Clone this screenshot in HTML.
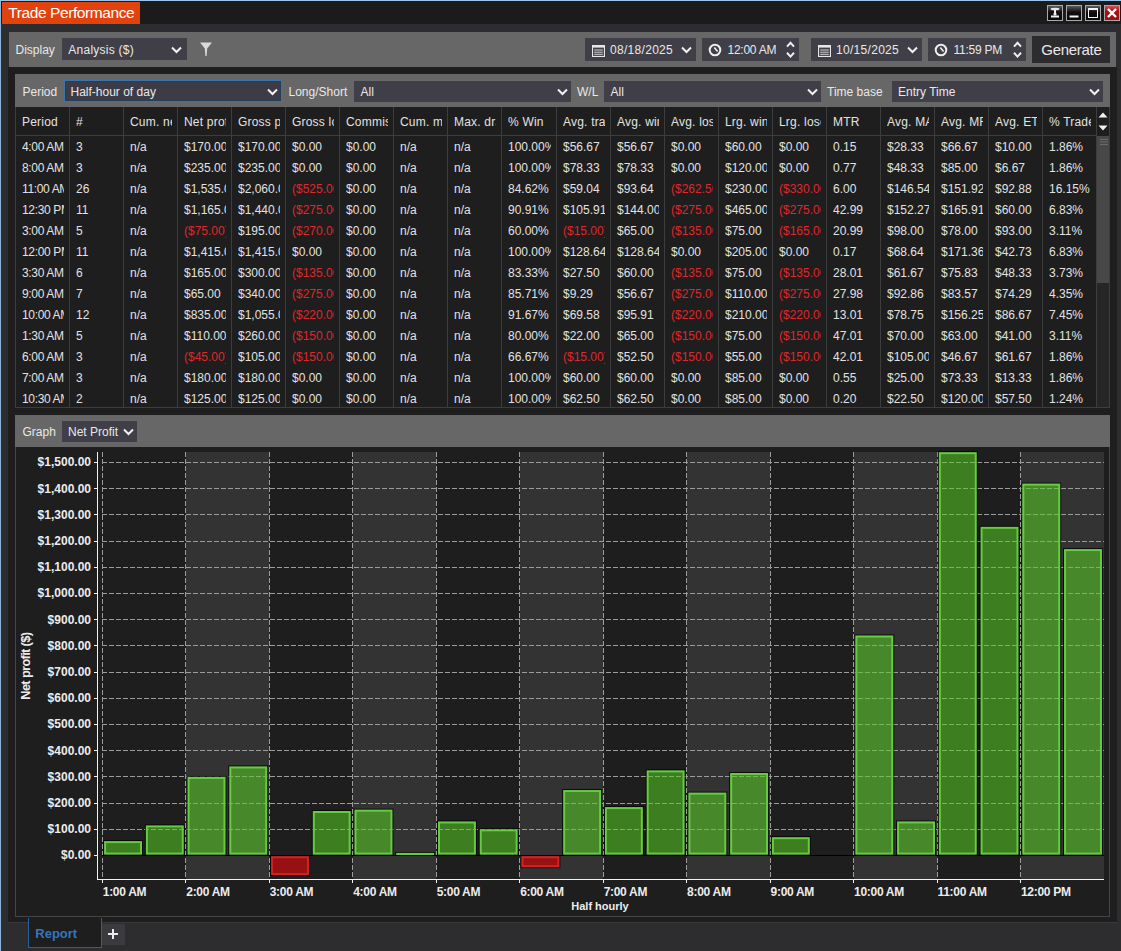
<!DOCTYPE html>
<html><head><meta charset="utf-8"><title>Trade Performance</title><style>
*{margin:0;padding:0;box-sizing:border-box}
html,body{width:1121px;height:951px;overflow:hidden;background:#2d2d30;font-family:"Liberation Sans",sans-serif;position:relative}
.a{position:absolute}
.t{position:absolute;white-space:nowrap}
.cell{position:absolute;white-space:nowrap;overflow:hidden;font-size:12px;line-height:21px;color:#e2e2e2}
.hd{position:absolute;white-space:nowrap;overflow:hidden;font-size:12px;line-height:28px;color:#e2e2e2;letter-spacing:0.2px}
.r{color:#e0262a}
svg{position:absolute;left:0;top:0}
</style></head><body>

<div class="a" style="left:0px;top:0px;width:1121px;height:1px;background:#9cc4e8;"></div>
<div class="a" style="left:0px;top:0px;width:1px;height:951px;background:#8fb6dc;"></div>
<div class="a" style="left:1px;top:1px;width:1120px;height:23px;background:#1b1b1c;"></div>
<div class="a" style="left:2px;top:2px;width:138px;height:22px;background:#e1430f;"></div>
<div class="t" style="left:8.20px;top:4.78px;font-size:15.5px;line-height:15.5px;color:#ffffff;font-weight:normal;letter-spacing:-0.4px">Trade Performance</div>
<div class="a" style="left:1047px;top:5px;width:16px;height:16px;border:1px solid #a9a9a9;background:linear-gradient(#5a5a5a,#0e0e0e 45%,#0a0a0a)"><svg width="14" height="14" viewBox="0 0 14 14"><ellipse cx="7" cy="3" rx="4.5" ry="1.3" fill="#e8e8e8"/><rect x="6" y="4" width="2" height="4" fill="#f0f0f0"/><ellipse cx="7" cy="8" rx="1.6" ry="1.6" fill="#f0f0f0"/><rect x="3" y="9.5" width="8" height="2" fill="#f0f0f0"/></svg></div>
<div class="a" style="left:1066px;top:5px;width:16px;height:16px;border:1px solid #a9a9a9;background:linear-gradient(#5a5a5a,#0e0e0e 45%,#0a0a0a)"><svg width="14" height="14" viewBox="0 0 14 14"><rect x="2.5" y="9.5" width="9" height="2" fill="#f4f4f4"/></svg></div>
<div class="a" style="left:1085px;top:5px;width:16px;height:16px;border:1px solid #a9a9a9;background:linear-gradient(#5a5a5a,#0e0e0e 45%,#0a0a0a)"><svg width="14" height="14" viewBox="0 0 14 14"><rect x="2.5" y="2.5" width="9" height="9" fill="none" stroke="#f4f4f4" stroke-width="1"/><rect x="2.5" y="2" width="9" height="2" fill="#f4f4f4"/></svg></div>
<div class="a" style="left:1104px;top:5px;width:16px;height:16px;border:1px solid #a9a9a9;background:linear-gradient(#d05050,#a81010 40%,#a01010)"><svg width="14" height="14" viewBox="0 0 14 14"><path d="M3 3L11 11M11 3L3 11" stroke="#fff" stroke-width="2.4"/></svg></div>
<div class="a" style="left:8px;top:67px;width:1px;height:856px;background:#3a3a3c;"></div>
<div class="a" style="left:1116px;top:67px;width:1px;height:856px;background:#3a3a3c;"></div>
<div class="a" style="left:8px;top:67px;width:1109px;height:856px;background:#1e1e1e;"></div>
<div class="a" style="left:8px;top:922px;width:1109px;height:1px;background:#3a3a3c;"></div>
<div class="a" style="left:9px;top:32px;width:1107px;height:35px;background:#676767;"></div>
<div class="t" style="left:15.50px;top:43.84px;font-size:12px;line-height:12px;color:#e8e8e8;font-weight:normal;">Display</div>
<div class="a" style="left:62px;top:38px;width:125px;height:22px;background:#403f48;"></div>
<div class="t" style="left:68.30px;top:43.84px;font-size:12px;line-height:12px;color:#e8e8e8;font-weight:normal;letter-spacing:0.25px">Analysis ($)</div>
<svg class="a" style="left:171px;top:45.5px" width="11" height="8" viewBox="0 0 11 8"><path d="M1 1.5L5.5 6L10 1.5" fill="none" stroke="#f0f0f0" stroke-width="2"/></svg>
<svg class="a" style="left:199px;top:41px" width="14" height="16" viewBox="0 0 14 16"><path d="M1 1.5H13L8.2 7.5L7.6 15H6.4L5.8 7.5Z" fill="#dadada"/></svg>
<div class="a" style="left:585px;top:38px;width:111px;height:23px;background:#403f48;"></div>
<svg class="a" style="left:592px;top:44.8px" width="13" height="12" viewBox="0 0 13 12"><rect x="0.5" y="0.5" width="12" height="11" fill="none" stroke="#e6e6e6" stroke-width="1.2"/><rect x="0" y="0" width="13" height="2.6" fill="#e6e6e6"/><path d="M2.2 5H10.8M2.2 7.2H10.8M2.2 9.3H10.8" stroke="#d4d4d4" stroke-width="1"/></svg>
<div class="t" style="left:610.00px;top:44.34px;font-size:12px;line-height:12px;color:#e8e8e8;font-weight:normal;letter-spacing:0.3px">08/18/2025</div>
<svg class="a" style="left:681px;top:46px" width="11" height="8" viewBox="0 0 11 8"><path d="M1 1.5L5.5 6L10 1.5" fill="none" stroke="#f0f0f0" stroke-width="2"/></svg>
<div class="a" style="left:702px;top:38px;width:97px;height:23px;background:#403f48;"></div>
<svg class="a" style="left:708px;top:43px" width="14" height="14" viewBox="0 0 14 14"><circle cx="7" cy="7" r="5.3" fill="none" stroke="#eeeeee" stroke-width="2"/><path d="M6.3 4.6L9.6 8.6" fill="none" stroke="#eeeeee" stroke-width="1.6"/></svg>
<div class="t" style="left:727.50px;top:44.34px;font-size:12px;line-height:12px;color:#e8e8e8;font-weight:normal;letter-spacing:-0.25px">12:00 AM</div>
<svg class="a" style="left:785.5px;top:40.5px" width="9" height="18" viewBox="0 0 9 18"><path d="M1 5.6L4.5 1.8L8 5.6M1 11.8L4.5 15.6L8 11.8" fill="none" stroke="#eeeeee" stroke-width="2"/></svg>
<div class="a" style="left:811px;top:38px;width:111px;height:23px;background:#403f48;"></div>
<svg class="a" style="left:818px;top:44.8px" width="13" height="12" viewBox="0 0 13 12"><rect x="0.5" y="0.5" width="12" height="11" fill="none" stroke="#e6e6e6" stroke-width="1.2"/><rect x="0" y="0" width="13" height="2.6" fill="#e6e6e6"/><path d="M2.2 5H10.8M2.2 7.2H10.8M2.2 9.3H10.8" stroke="#d4d4d4" stroke-width="1"/></svg>
<div class="t" style="left:836.00px;top:44.34px;font-size:12px;line-height:12px;color:#e8e8e8;font-weight:normal;letter-spacing:0.3px">10/15/2025</div>
<svg class="a" style="left:907px;top:46px" width="11" height="8" viewBox="0 0 11 8"><path d="M1 1.5L5.5 6L10 1.5" fill="none" stroke="#f0f0f0" stroke-width="2"/></svg>
<div class="a" style="left:928px;top:38px;width:98px;height:23px;background:#403f48;"></div>
<svg class="a" style="left:934px;top:43px" width="14" height="14" viewBox="0 0 14 14"><circle cx="7" cy="7" r="5.3" fill="none" stroke="#eeeeee" stroke-width="2"/><path d="M6.3 4.6L9.6 8.6" fill="none" stroke="#eeeeee" stroke-width="1.6"/></svg>
<div class="t" style="left:953.50px;top:44.34px;font-size:12px;line-height:12px;color:#e8e8e8;font-weight:normal;letter-spacing:-0.25px">11:59 PM</div>
<svg class="a" style="left:1012.5px;top:40.5px" width="9" height="18" viewBox="0 0 9 18"><path d="M1 5.6L4.5 1.8L8 5.6M1 11.8L4.5 15.6L8 11.8" fill="none" stroke="#eeeeee" stroke-width="2"/></svg>
<div class="a" style="left:1032px;top:36px;width:78px;height:27px;background:#2c2c2e;"></div>
<div class="t" style="left:1041.30px;top:42.30px;font-size:15px;line-height:15px;color:#e8e8e8;font-weight:normal;letter-spacing:-0.3px">Generate</div>
<div class="a" style="left:15px;top:74px;width:1095px;height:33px;background:#676767;"></div>
<div class="t" style="left:22.50px;top:86.34px;font-size:12px;line-height:12px;color:#e8e8e8;font-weight:normal;">Period</div>
<div class="a" style="left:64px;top:80px;width:218px;height:22px;background:#3d3c46;border:1px solid #3a74ad;box-shadow:inset 0 0 0 1px #22405e"></div>
<div class="t" style="left:70.50px;top:86.34px;font-size:12px;line-height:12px;color:#e8e8e8;font-weight:normal;">Half-hour of day</div>
<svg class="a" style="left:267px;top:88px" width="11" height="8" viewBox="0 0 11 8"><path d="M1 1.5L5.5 6L10 1.5" fill="none" stroke="#f0f0f0" stroke-width="2"/></svg>
<div class="t" style="left:288.50px;top:86.34px;font-size:12px;line-height:12px;color:#e8e8e8;font-weight:normal;">Long/Short</div>
<div class="a" style="left:354px;top:81px;width:217px;height:21px;background:#403f48;"></div>
<div class="t" style="left:360.50px;top:86.34px;font-size:12px;line-height:12px;color:#e8e8e8;font-weight:normal;">All</div>
<svg class="a" style="left:556.5px;top:88px" width="11" height="8" viewBox="0 0 11 8"><path d="M1 1.5L5.5 6L10 1.5" fill="none" stroke="#f0f0f0" stroke-width="2"/></svg>
<div class="t" style="left:577.00px;top:86.34px;font-size:12px;line-height:12px;color:#e8e8e8;font-weight:normal;">W/L</div>
<div class="a" style="left:604px;top:81px;width:217px;height:21px;background:#403f48;"></div>
<div class="t" style="left:610.50px;top:86.34px;font-size:12px;line-height:12px;color:#e8e8e8;font-weight:normal;">All</div>
<svg class="a" style="left:807px;top:88px" width="11" height="8" viewBox="0 0 11 8"><path d="M1 1.5L5.5 6L10 1.5" fill="none" stroke="#f0f0f0" stroke-width="2"/></svg>
<div class="t" style="left:827.00px;top:86.34px;font-size:12px;line-height:12px;color:#e8e8e8;font-weight:normal;">Time base</div>
<div class="a" style="left:892px;top:81px;width:211px;height:21px;background:#403f48;"></div>
<div class="t" style="left:898.00px;top:86.34px;font-size:12px;line-height:12px;color:#e8e8e8;font-weight:normal;">Entry Time</div>
<svg class="a" style="left:1088.5px;top:88px" width="11" height="8" viewBox="0 0 11 8"><path d="M1 1.5L5.5 6L10 1.5" fill="none" stroke="#f0f0f0" stroke-width="2"/></svg>
<div class="a" style="left:15px;top:107px;width:1095px;height:301px;background:#1e1e1e;"></div>
<div class="a" style="left:15px;top:107px;width:1095px;height:301px;overflow:hidden">
<div class="hd" style="left:7px;top:1px;width:42px">Period</div>
<div class="hd" style="left:61px;top:1px;width:42px">#</div>
<div class="hd" style="left:115px;top:1px;width:42px">Cum. net profit</div>
<div class="hd" style="left:169px;top:1px;width:42px">Net profit</div>
<div class="hd" style="left:223px;top:1px;width:42px">Gross profit</div>
<div class="hd" style="left:277px;top:1px;width:42px">Gross loss</div>
<div class="hd" style="left:331px;top:1px;width:42px">Commission</div>
<div class="hd" style="left:385px;top:1px;width:42px">Cum. max drawdown</div>
<div class="hd" style="left:439px;top:1px;width:42px">Max. drawdown</div>
<div class="hd" style="left:493px;top:1px;width:43px">% Win</div>
<div class="hd" style="left:548px;top:1px;width:42px">Avg. trade</div>
<div class="hd" style="left:602px;top:1px;width:42px">Avg. winner</div>
<div class="hd" style="left:656px;top:1px;width:42px">Avg. loser</div>
<div class="hd" style="left:710px;top:1px;width:42px">Lrg. winner</div>
<div class="hd" style="left:764px;top:1px;width:42px">Lrg. loser</div>
<div class="hd" style="left:818px;top:1px;width:42px">MTR</div>
<div class="hd" style="left:872px;top:1px;width:42px">Avg. MAE</div>
<div class="hd" style="left:926px;top:1px;width:42px">Avg. MFE</div>
<div class="hd" style="left:980px;top:1px;width:42px">Avg. ETD</div>
<div class="hd" style="left:1034px;top:1px;width:42px">% Trade</div>
<div class="cell" style="left:7px;top:30px;width:42px;letter-spacing:-0.35px;">4:00 AM</div>
<div class="cell" style="left:61px;top:30px;width:42px;">3</div>
<div class="cell" style="left:115px;top:30px;width:42px;">n/a</div>
<div class="cell" style="left:169px;top:30px;width:42px;">$170.00</div>
<div class="cell" style="left:223px;top:30px;width:42px;">$170.00</div>
<div class="cell" style="left:277px;top:30px;width:42px;">$0.00</div>
<div class="cell" style="left:331px;top:30px;width:42px;">$0.00</div>
<div class="cell" style="left:385px;top:30px;width:42px;">n/a</div>
<div class="cell" style="left:439px;top:30px;width:42px;">n/a</div>
<div class="cell" style="left:493px;top:30px;width:43px;">100.00%</div>
<div class="cell" style="left:548px;top:30px;width:42px;">$56.67</div>
<div class="cell" style="left:602px;top:30px;width:42px;">$56.67</div>
<div class="cell" style="left:656px;top:30px;width:42px;">$0.00</div>
<div class="cell" style="left:710px;top:30px;width:42px;">$60.00</div>
<div class="cell" style="left:764px;top:30px;width:42px;">$0.00</div>
<div class="cell" style="left:818px;top:30px;width:42px;">0.15</div>
<div class="cell" style="left:872px;top:30px;width:42px;">$28.33</div>
<div class="cell" style="left:926px;top:30px;width:42px;">$66.67</div>
<div class="cell" style="left:980px;top:30px;width:42px;">$10.00</div>
<div class="cell" style="left:1034px;top:30px;width:42px;">1.86%</div>
<div class="cell" style="left:7px;top:51px;width:42px;letter-spacing:-0.35px;">8:00 AM</div>
<div class="cell" style="left:61px;top:51px;width:42px;">3</div>
<div class="cell" style="left:115px;top:51px;width:42px;">n/a</div>
<div class="cell" style="left:169px;top:51px;width:42px;">$235.00</div>
<div class="cell" style="left:223px;top:51px;width:42px;">$235.00</div>
<div class="cell" style="left:277px;top:51px;width:42px;">$0.00</div>
<div class="cell" style="left:331px;top:51px;width:42px;">$0.00</div>
<div class="cell" style="left:385px;top:51px;width:42px;">n/a</div>
<div class="cell" style="left:439px;top:51px;width:42px;">n/a</div>
<div class="cell" style="left:493px;top:51px;width:43px;">100.00%</div>
<div class="cell" style="left:548px;top:51px;width:42px;">$78.33</div>
<div class="cell" style="left:602px;top:51px;width:42px;">$78.33</div>
<div class="cell" style="left:656px;top:51px;width:42px;">$0.00</div>
<div class="cell" style="left:710px;top:51px;width:42px;">$120.00</div>
<div class="cell" style="left:764px;top:51px;width:42px;">$0.00</div>
<div class="cell" style="left:818px;top:51px;width:42px;">0.77</div>
<div class="cell" style="left:872px;top:51px;width:42px;">$48.33</div>
<div class="cell" style="left:926px;top:51px;width:42px;">$85.00</div>
<div class="cell" style="left:980px;top:51px;width:42px;">$6.67</div>
<div class="cell" style="left:1034px;top:51px;width:42px;">1.86%</div>
<div class="cell" style="left:7px;top:72px;width:42px;letter-spacing:-0.35px;">11:00 AM</div>
<div class="cell" style="left:61px;top:72px;width:42px;">26</div>
<div class="cell" style="left:115px;top:72px;width:42px;">n/a</div>
<div class="cell" style="left:169px;top:72px;width:42px;">$1,535.00</div>
<div class="cell" style="left:223px;top:72px;width:42px;">$2,060.00</div>
<div class="cell r" style="left:277px;top:72px;width:42px;">($525.00)</div>
<div class="cell" style="left:331px;top:72px;width:42px;">$0.00</div>
<div class="cell" style="left:385px;top:72px;width:42px;">n/a</div>
<div class="cell" style="left:439px;top:72px;width:42px;">n/a</div>
<div class="cell" style="left:493px;top:72px;width:43px;">84.62%</div>
<div class="cell" style="left:548px;top:72px;width:42px;">$59.04</div>
<div class="cell" style="left:602px;top:72px;width:42px;">$93.64</div>
<div class="cell r" style="left:656px;top:72px;width:42px;">($262.50)</div>
<div class="cell" style="left:710px;top:72px;width:42px;">$230.00</div>
<div class="cell r" style="left:764px;top:72px;width:42px;">($330.00)</div>
<div class="cell" style="left:818px;top:72px;width:42px;">6.00</div>
<div class="cell" style="left:872px;top:72px;width:42px;">$146.54</div>
<div class="cell" style="left:926px;top:72px;width:42px;">$151.92</div>
<div class="cell" style="left:980px;top:72px;width:42px;">$92.88</div>
<div class="cell" style="left:1034px;top:72px;width:42px;">16.15%</div>
<div class="cell" style="left:7px;top:93px;width:42px;letter-spacing:-0.35px;">12:30 PM</div>
<div class="cell" style="left:61px;top:93px;width:42px;">11</div>
<div class="cell" style="left:115px;top:93px;width:42px;">n/a</div>
<div class="cell" style="left:169px;top:93px;width:42px;">$1,165.00</div>
<div class="cell" style="left:223px;top:93px;width:42px;">$1,440.00</div>
<div class="cell r" style="left:277px;top:93px;width:42px;">($275.00)</div>
<div class="cell" style="left:331px;top:93px;width:42px;">$0.00</div>
<div class="cell" style="left:385px;top:93px;width:42px;">n/a</div>
<div class="cell" style="left:439px;top:93px;width:42px;">n/a</div>
<div class="cell" style="left:493px;top:93px;width:43px;">90.91%</div>
<div class="cell" style="left:548px;top:93px;width:42px;">$105.91</div>
<div class="cell" style="left:602px;top:93px;width:42px;">$144.00</div>
<div class="cell r" style="left:656px;top:93px;width:42px;">($275.00)</div>
<div class="cell" style="left:710px;top:93px;width:42px;">$465.00</div>
<div class="cell r" style="left:764px;top:93px;width:42px;">($275.00)</div>
<div class="cell" style="left:818px;top:93px;width:42px;">42.99</div>
<div class="cell" style="left:872px;top:93px;width:42px;">$152.27</div>
<div class="cell" style="left:926px;top:93px;width:42px;">$165.91</div>
<div class="cell" style="left:980px;top:93px;width:42px;">$60.00</div>
<div class="cell" style="left:1034px;top:93px;width:42px;">6.83%</div>
<div class="cell" style="left:7px;top:114px;width:42px;letter-spacing:-0.35px;">3:00 AM</div>
<div class="cell" style="left:61px;top:114px;width:42px;">5</div>
<div class="cell" style="left:115px;top:114px;width:42px;">n/a</div>
<div class="cell r" style="left:169px;top:114px;width:42px;">($75.00)</div>
<div class="cell" style="left:223px;top:114px;width:42px;">$195.00</div>
<div class="cell r" style="left:277px;top:114px;width:42px;">($270.00)</div>
<div class="cell" style="left:331px;top:114px;width:42px;">$0.00</div>
<div class="cell" style="left:385px;top:114px;width:42px;">n/a</div>
<div class="cell" style="left:439px;top:114px;width:42px;">n/a</div>
<div class="cell" style="left:493px;top:114px;width:43px;">60.00%</div>
<div class="cell r" style="left:548px;top:114px;width:42px;">($15.00)</div>
<div class="cell" style="left:602px;top:114px;width:42px;">$65.00</div>
<div class="cell r" style="left:656px;top:114px;width:42px;">($135.00)</div>
<div class="cell" style="left:710px;top:114px;width:42px;">$75.00</div>
<div class="cell r" style="left:764px;top:114px;width:42px;">($165.00)</div>
<div class="cell" style="left:818px;top:114px;width:42px;">20.99</div>
<div class="cell" style="left:872px;top:114px;width:42px;">$98.00</div>
<div class="cell" style="left:926px;top:114px;width:42px;">$78.00</div>
<div class="cell" style="left:980px;top:114px;width:42px;">$93.00</div>
<div class="cell" style="left:1034px;top:114px;width:42px;">3.11%</div>
<div class="cell" style="left:7px;top:135px;width:42px;letter-spacing:-0.35px;">12:00 PM</div>
<div class="cell" style="left:61px;top:135px;width:42px;">11</div>
<div class="cell" style="left:115px;top:135px;width:42px;">n/a</div>
<div class="cell" style="left:169px;top:135px;width:42px;">$1,415.00</div>
<div class="cell" style="left:223px;top:135px;width:42px;">$1,415.00</div>
<div class="cell" style="left:277px;top:135px;width:42px;">$0.00</div>
<div class="cell" style="left:331px;top:135px;width:42px;">$0.00</div>
<div class="cell" style="left:385px;top:135px;width:42px;">n/a</div>
<div class="cell" style="left:439px;top:135px;width:42px;">n/a</div>
<div class="cell" style="left:493px;top:135px;width:43px;">100.00%</div>
<div class="cell" style="left:548px;top:135px;width:42px;">$128.64</div>
<div class="cell" style="left:602px;top:135px;width:42px;">$128.64</div>
<div class="cell" style="left:656px;top:135px;width:42px;">$0.00</div>
<div class="cell" style="left:710px;top:135px;width:42px;">$205.00</div>
<div class="cell" style="left:764px;top:135px;width:42px;">$0.00</div>
<div class="cell" style="left:818px;top:135px;width:42px;">0.17</div>
<div class="cell" style="left:872px;top:135px;width:42px;">$68.64</div>
<div class="cell" style="left:926px;top:135px;width:42px;">$171.36</div>
<div class="cell" style="left:980px;top:135px;width:42px;">$42.73</div>
<div class="cell" style="left:1034px;top:135px;width:42px;">6.83%</div>
<div class="cell" style="left:7px;top:156px;width:42px;letter-spacing:-0.35px;">3:30 AM</div>
<div class="cell" style="left:61px;top:156px;width:42px;">6</div>
<div class="cell" style="left:115px;top:156px;width:42px;">n/a</div>
<div class="cell" style="left:169px;top:156px;width:42px;">$165.00</div>
<div class="cell" style="left:223px;top:156px;width:42px;">$300.00</div>
<div class="cell r" style="left:277px;top:156px;width:42px;">($135.00)</div>
<div class="cell" style="left:331px;top:156px;width:42px;">$0.00</div>
<div class="cell" style="left:385px;top:156px;width:42px;">n/a</div>
<div class="cell" style="left:439px;top:156px;width:42px;">n/a</div>
<div class="cell" style="left:493px;top:156px;width:43px;">83.33%</div>
<div class="cell" style="left:548px;top:156px;width:42px;">$27.50</div>
<div class="cell" style="left:602px;top:156px;width:42px;">$60.00</div>
<div class="cell r" style="left:656px;top:156px;width:42px;">($135.00)</div>
<div class="cell" style="left:710px;top:156px;width:42px;">$75.00</div>
<div class="cell r" style="left:764px;top:156px;width:42px;">($135.00)</div>
<div class="cell" style="left:818px;top:156px;width:42px;">28.01</div>
<div class="cell" style="left:872px;top:156px;width:42px;">$61.67</div>
<div class="cell" style="left:926px;top:156px;width:42px;">$75.83</div>
<div class="cell" style="left:980px;top:156px;width:42px;">$48.33</div>
<div class="cell" style="left:1034px;top:156px;width:42px;">3.73%</div>
<div class="cell" style="left:7px;top:177px;width:42px;letter-spacing:-0.35px;">9:00 AM</div>
<div class="cell" style="left:61px;top:177px;width:42px;">7</div>
<div class="cell" style="left:115px;top:177px;width:42px;">n/a</div>
<div class="cell" style="left:169px;top:177px;width:42px;">$65.00</div>
<div class="cell" style="left:223px;top:177px;width:42px;">$340.00</div>
<div class="cell r" style="left:277px;top:177px;width:42px;">($275.00)</div>
<div class="cell" style="left:331px;top:177px;width:42px;">$0.00</div>
<div class="cell" style="left:385px;top:177px;width:42px;">n/a</div>
<div class="cell" style="left:439px;top:177px;width:42px;">n/a</div>
<div class="cell" style="left:493px;top:177px;width:43px;">85.71%</div>
<div class="cell" style="left:548px;top:177px;width:42px;">$9.29</div>
<div class="cell" style="left:602px;top:177px;width:42px;">$56.67</div>
<div class="cell r" style="left:656px;top:177px;width:42px;">($275.00)</div>
<div class="cell" style="left:710px;top:177px;width:42px;">$110.00</div>
<div class="cell r" style="left:764px;top:177px;width:42px;">($275.00)</div>
<div class="cell" style="left:818px;top:177px;width:42px;">27.98</div>
<div class="cell" style="left:872px;top:177px;width:42px;">$92.86</div>
<div class="cell" style="left:926px;top:177px;width:42px;">$83.57</div>
<div class="cell" style="left:980px;top:177px;width:42px;">$74.29</div>
<div class="cell" style="left:1034px;top:177px;width:42px;">4.35%</div>
<div class="cell" style="left:7px;top:198px;width:42px;letter-spacing:-0.35px;">10:00 AM</div>
<div class="cell" style="left:61px;top:198px;width:42px;">12</div>
<div class="cell" style="left:115px;top:198px;width:42px;">n/a</div>
<div class="cell" style="left:169px;top:198px;width:42px;">$835.00</div>
<div class="cell" style="left:223px;top:198px;width:42px;">$1,055.00</div>
<div class="cell r" style="left:277px;top:198px;width:42px;">($220.00)</div>
<div class="cell" style="left:331px;top:198px;width:42px;">$0.00</div>
<div class="cell" style="left:385px;top:198px;width:42px;">n/a</div>
<div class="cell" style="left:439px;top:198px;width:42px;">n/a</div>
<div class="cell" style="left:493px;top:198px;width:43px;">91.67%</div>
<div class="cell" style="left:548px;top:198px;width:42px;">$69.58</div>
<div class="cell" style="left:602px;top:198px;width:42px;">$95.91</div>
<div class="cell r" style="left:656px;top:198px;width:42px;">($220.00)</div>
<div class="cell" style="left:710px;top:198px;width:42px;">$210.00</div>
<div class="cell r" style="left:764px;top:198px;width:42px;">($220.00)</div>
<div class="cell" style="left:818px;top:198px;width:42px;">13.01</div>
<div class="cell" style="left:872px;top:198px;width:42px;">$78.75</div>
<div class="cell" style="left:926px;top:198px;width:42px;">$156.25</div>
<div class="cell" style="left:980px;top:198px;width:42px;">$86.67</div>
<div class="cell" style="left:1034px;top:198px;width:42px;">7.45%</div>
<div class="cell" style="left:7px;top:219px;width:42px;letter-spacing:-0.35px;">1:30 AM</div>
<div class="cell" style="left:61px;top:219px;width:42px;">5</div>
<div class="cell" style="left:115px;top:219px;width:42px;">n/a</div>
<div class="cell" style="left:169px;top:219px;width:42px;">$110.00</div>
<div class="cell" style="left:223px;top:219px;width:42px;">$260.00</div>
<div class="cell r" style="left:277px;top:219px;width:42px;">($150.00)</div>
<div class="cell" style="left:331px;top:219px;width:42px;">$0.00</div>
<div class="cell" style="left:385px;top:219px;width:42px;">n/a</div>
<div class="cell" style="left:439px;top:219px;width:42px;">n/a</div>
<div class="cell" style="left:493px;top:219px;width:43px;">80.00%</div>
<div class="cell" style="left:548px;top:219px;width:42px;">$22.00</div>
<div class="cell" style="left:602px;top:219px;width:42px;">$65.00</div>
<div class="cell r" style="left:656px;top:219px;width:42px;">($150.00)</div>
<div class="cell" style="left:710px;top:219px;width:42px;">$75.00</div>
<div class="cell r" style="left:764px;top:219px;width:42px;">($150.00)</div>
<div class="cell" style="left:818px;top:219px;width:42px;">47.01</div>
<div class="cell" style="left:872px;top:219px;width:42px;">$70.00</div>
<div class="cell" style="left:926px;top:219px;width:42px;">$63.00</div>
<div class="cell" style="left:980px;top:219px;width:42px;">$41.00</div>
<div class="cell" style="left:1034px;top:219px;width:42px;">3.11%</div>
<div class="cell" style="left:7px;top:240px;width:42px;letter-spacing:-0.35px;">6:00 AM</div>
<div class="cell" style="left:61px;top:240px;width:42px;">3</div>
<div class="cell" style="left:115px;top:240px;width:42px;">n/a</div>
<div class="cell r" style="left:169px;top:240px;width:42px;">($45.00)</div>
<div class="cell" style="left:223px;top:240px;width:42px;">$105.00</div>
<div class="cell r" style="left:277px;top:240px;width:42px;">($150.00)</div>
<div class="cell" style="left:331px;top:240px;width:42px;">$0.00</div>
<div class="cell" style="left:385px;top:240px;width:42px;">n/a</div>
<div class="cell" style="left:439px;top:240px;width:42px;">n/a</div>
<div class="cell" style="left:493px;top:240px;width:43px;">66.67%</div>
<div class="cell r" style="left:548px;top:240px;width:42px;">($15.00)</div>
<div class="cell" style="left:602px;top:240px;width:42px;">$52.50</div>
<div class="cell r" style="left:656px;top:240px;width:42px;">($150.00)</div>
<div class="cell" style="left:710px;top:240px;width:42px;">$55.00</div>
<div class="cell r" style="left:764px;top:240px;width:42px;">($150.00)</div>
<div class="cell" style="left:818px;top:240px;width:42px;">42.01</div>
<div class="cell" style="left:872px;top:240px;width:42px;">$105.00</div>
<div class="cell" style="left:926px;top:240px;width:42px;">$46.67</div>
<div class="cell" style="left:980px;top:240px;width:42px;">$61.67</div>
<div class="cell" style="left:1034px;top:240px;width:42px;">1.86%</div>
<div class="cell" style="left:7px;top:261px;width:42px;letter-spacing:-0.35px;">7:00 AM</div>
<div class="cell" style="left:61px;top:261px;width:42px;">3</div>
<div class="cell" style="left:115px;top:261px;width:42px;">n/a</div>
<div class="cell" style="left:169px;top:261px;width:42px;">$180.00</div>
<div class="cell" style="left:223px;top:261px;width:42px;">$180.00</div>
<div class="cell" style="left:277px;top:261px;width:42px;">$0.00</div>
<div class="cell" style="left:331px;top:261px;width:42px;">$0.00</div>
<div class="cell" style="left:385px;top:261px;width:42px;">n/a</div>
<div class="cell" style="left:439px;top:261px;width:42px;">n/a</div>
<div class="cell" style="left:493px;top:261px;width:43px;">100.00%</div>
<div class="cell" style="left:548px;top:261px;width:42px;">$60.00</div>
<div class="cell" style="left:602px;top:261px;width:42px;">$60.00</div>
<div class="cell" style="left:656px;top:261px;width:42px;">$0.00</div>
<div class="cell" style="left:710px;top:261px;width:42px;">$85.00</div>
<div class="cell" style="left:764px;top:261px;width:42px;">$0.00</div>
<div class="cell" style="left:818px;top:261px;width:42px;">0.55</div>
<div class="cell" style="left:872px;top:261px;width:42px;">$25.00</div>
<div class="cell" style="left:926px;top:261px;width:42px;">$73.33</div>
<div class="cell" style="left:980px;top:261px;width:42px;">$13.33</div>
<div class="cell" style="left:1034px;top:261px;width:42px;">1.86%</div>
<div class="cell" style="left:7px;top:282px;width:42px;letter-spacing:-0.35px;">10:30 AM</div>
<div class="cell" style="left:61px;top:282px;width:42px;">2</div>
<div class="cell" style="left:115px;top:282px;width:42px;">n/a</div>
<div class="cell" style="left:169px;top:282px;width:42px;">$125.00</div>
<div class="cell" style="left:223px;top:282px;width:42px;">$125.00</div>
<div class="cell" style="left:277px;top:282px;width:42px;">$0.00</div>
<div class="cell" style="left:331px;top:282px;width:42px;">$0.00</div>
<div class="cell" style="left:385px;top:282px;width:42px;">n/a</div>
<div class="cell" style="left:439px;top:282px;width:42px;">n/a</div>
<div class="cell" style="left:493px;top:282px;width:43px;">100.00%</div>
<div class="cell" style="left:548px;top:282px;width:42px;">$62.50</div>
<div class="cell" style="left:602px;top:282px;width:42px;">$62.50</div>
<div class="cell" style="left:656px;top:282px;width:42px;">$0.00</div>
<div class="cell" style="left:710px;top:282px;width:42px;">$85.00</div>
<div class="cell" style="left:764px;top:282px;width:42px;">$0.00</div>
<div class="cell" style="left:818px;top:282px;width:42px;">0.20</div>
<div class="cell" style="left:872px;top:282px;width:42px;">$22.50</div>
<div class="cell" style="left:926px;top:282px;width:42px;">$120.00</div>
<div class="cell" style="left:980px;top:282px;width:42px;">$57.50</div>
<div class="cell" style="left:1034px;top:282px;width:42px;">1.24%</div>
</div>
<div class="a" style="left:15px;top:135px;width:1082px;height:1px;background:#3d3d3d;"></div>
<div class="a" style="left:15px;top:107px;width:1px;height:300px;background:#3d3d3d;"></div>
<div class="a" style="left:69px;top:107px;width:1px;height:300px;background:#3d3d3d;"></div>
<div class="a" style="left:123px;top:107px;width:1px;height:300px;background:#3d3d3d;"></div>
<div class="a" style="left:177px;top:107px;width:1px;height:300px;background:#3d3d3d;"></div>
<div class="a" style="left:231px;top:107px;width:1px;height:300px;background:#3d3d3d;"></div>
<div class="a" style="left:285px;top:107px;width:1px;height:300px;background:#3d3d3d;"></div>
<div class="a" style="left:339px;top:107px;width:1px;height:300px;background:#3d3d3d;"></div>
<div class="a" style="left:393px;top:107px;width:1px;height:300px;background:#3d3d3d;"></div>
<div class="a" style="left:447px;top:107px;width:1px;height:300px;background:#3d3d3d;"></div>
<div class="a" style="left:501px;top:107px;width:1px;height:300px;background:#3d3d3d;"></div>
<div class="a" style="left:556px;top:107px;width:1px;height:300px;background:#3d3d3d;"></div>
<div class="a" style="left:610px;top:107px;width:1px;height:300px;background:#3d3d3d;"></div>
<div class="a" style="left:664px;top:107px;width:1px;height:300px;background:#3d3d3d;"></div>
<div class="a" style="left:718px;top:107px;width:1px;height:300px;background:#3d3d3d;"></div>
<div class="a" style="left:772px;top:107px;width:1px;height:300px;background:#3d3d3d;"></div>
<div class="a" style="left:826px;top:107px;width:1px;height:300px;background:#3d3d3d;"></div>
<div class="a" style="left:880px;top:107px;width:1px;height:300px;background:#3d3d3d;"></div>
<div class="a" style="left:934px;top:107px;width:1px;height:300px;background:#3d3d3d;"></div>
<div class="a" style="left:988px;top:107px;width:1px;height:300px;background:#3d3d3d;"></div>
<div class="a" style="left:1042px;top:107px;width:1px;height:300px;background:#3d3d3d;"></div>
<div class="a" style="left:1096px;top:107px;width:1px;height:300px;background:#3d3d3d;"></div>
<div class="a" style="left:15px;top:407px;width:1095px;height:1px;background:#3d3d3d;"></div>
<div class="a" style="left:1109px;top:107px;width:1px;height:301px;background:#3d3d3d;"></div>
<div class="a" style="left:1097px;top:136px;width:12px;height:271px;background:#262626;"></div>
<div class="a" style="left:1097px;top:136px;width:12px;height:147px;background:#484848;"></div>
<svg class="a" style="left:1098px;top:138px" width="11" height="8"><path d="M2 1.5H10M2 4H10M2 6.5H10" stroke="#6a6a6a" stroke-width="1"/></svg>
<svg class="a" style="left:1097px;top:110px" width="12" height="24"><path d="M1.5 7.5L6 2.5L10.5 7.5Z M1.5 15.5L6 20.5L10.5 15.5Z" fill="#f0f0f0"/></svg>
<div class="a" style="left:15px;top:415px;width:1095px;height:32px;background:#676767;"></div>
<div class="t" style="left:22.50px;top:425.54px;font-size:12px;line-height:12px;color:#e8e8e8;font-weight:normal;">Graph</div>
<div class="a" style="left:62px;top:421px;width:75px;height:21px;background:#403f48;"></div>
<div class="t" style="left:68.00px;top:425.54px;font-size:12px;line-height:12px;color:#e8e8e8;font-weight:normal;">Net Profit</div>
<svg class="a" style="left:122.5px;top:428px" width="11" height="8" viewBox="0 0 11 8"><path d="M1 1.5L5.5 6L10 1.5" fill="none" stroke="#f0f0f0" stroke-width="2"/></svg>
<div class="a" style="left:15px;top:447px;width:1095px;height:470px;background:#1e1e1e;"></div>
<div class="a" style="left:15px;top:447px;width:1px;height:470px;background:#454545;"></div>
<div class="a" style="left:1109px;top:447px;width:1px;height:470px;background:#454545;"></div>
<div class="a" style="left:15px;top:916px;width:1095px;height:1px;background:#454545;"></div>
<div class="a" style="left:28px;top:918px;width:74px;height:30px;background:#1e1e1e;border:1px solid #28609a;border-top:none"></div>
<div class="t" style="left:35.30px;top:927.20px;font-size:13px;line-height:13px;color:#3476bd;font-weight:bold;">Report</div>
<div class="a" style="left:102px;top:924px;width:23px;height:21px;background:#3b3b3f;"></div>
<svg class="a" style="left:107px;top:928px" width="12" height="12"><path d="M6 1V11M1 6H11" stroke="#ececec" stroke-width="2"/></svg>
<svg width="1121" height="951" viewBox="0 0 1121 951" style="position:absolute;left:0;top:0" shape-rendering="crispEdges">
<rect x="185.77" y="452" width="83.47" height="427" fill="#333333"/>
<rect x="352.72" y="452" width="83.47" height="427" fill="#333333"/>
<rect x="519.67" y="452" width="83.47" height="427" fill="#333333"/>
<rect x="686.62" y="452" width="83.47" height="427" fill="#333333"/>
<rect x="853.57" y="452" width="83.47" height="427" fill="#333333"/>
<rect x="1020.51" y="452" width="83.47" height="427" fill="#333333"/>
<line x1="102" y1="829.5" x2="1104" y2="829.5" stroke="#9c9c9c" stroke-width="1" stroke-dasharray="5,2"/>
<line x1="102" y1="803.5" x2="1104" y2="803.5" stroke="#9c9c9c" stroke-width="1" stroke-dasharray="5,2"/>
<line x1="102" y1="776.5" x2="1104" y2="776.5" stroke="#9c9c9c" stroke-width="1" stroke-dasharray="5,2"/>
<line x1="102" y1="750.5" x2="1104" y2="750.5" stroke="#9c9c9c" stroke-width="1" stroke-dasharray="5,2"/>
<line x1="102" y1="724.5" x2="1104" y2="724.5" stroke="#9c9c9c" stroke-width="1" stroke-dasharray="5,2"/>
<line x1="102" y1="698.5" x2="1104" y2="698.5" stroke="#9c9c9c" stroke-width="1" stroke-dasharray="5,2"/>
<line x1="102" y1="672.5" x2="1104" y2="672.5" stroke="#9c9c9c" stroke-width="1" stroke-dasharray="5,2"/>
<line x1="102" y1="645.5" x2="1104" y2="645.5" stroke="#9c9c9c" stroke-width="1" stroke-dasharray="5,2"/>
<line x1="102" y1="619.5" x2="1104" y2="619.5" stroke="#9c9c9c" stroke-width="1" stroke-dasharray="5,2"/>
<line x1="102" y1="593.5" x2="1104" y2="593.5" stroke="#9c9c9c" stroke-width="1" stroke-dasharray="5,2"/>
<line x1="102" y1="567.5" x2="1104" y2="567.5" stroke="#9c9c9c" stroke-width="1" stroke-dasharray="5,2"/>
<line x1="102" y1="541.5" x2="1104" y2="541.5" stroke="#9c9c9c" stroke-width="1" stroke-dasharray="5,2"/>
<line x1="102" y1="514.5" x2="1104" y2="514.5" stroke="#9c9c9c" stroke-width="1" stroke-dasharray="5,2"/>
<line x1="102" y1="488.5" x2="1104" y2="488.5" stroke="#9c9c9c" stroke-width="1" stroke-dasharray="5,2"/>
<line x1="102" y1="462.5" x2="1104" y2="462.5" stroke="#9c9c9c" stroke-width="1" stroke-dasharray="5,2"/>
<line x1="102.5" y1="452" x2="102.5" y2="879" stroke="#9c9c9c" stroke-width="1" stroke-dasharray="5,2"/>
<line x1="185.5" y1="452" x2="185.5" y2="879" stroke="#9c9c9c" stroke-width="1" stroke-dasharray="5,2"/>
<line x1="269.5" y1="452" x2="269.5" y2="879" stroke="#9c9c9c" stroke-width="1" stroke-dasharray="5,2"/>
<line x1="352.5" y1="452" x2="352.5" y2="879" stroke="#9c9c9c" stroke-width="1" stroke-dasharray="5,2"/>
<line x1="436.5" y1="452" x2="436.5" y2="879" stroke="#9c9c9c" stroke-width="1" stroke-dasharray="5,2"/>
<line x1="519.5" y1="452" x2="519.5" y2="879" stroke="#9c9c9c" stroke-width="1" stroke-dasharray="5,2"/>
<line x1="603.5" y1="452" x2="603.5" y2="879" stroke="#9c9c9c" stroke-width="1" stroke-dasharray="5,2"/>
<line x1="686.5" y1="452" x2="686.5" y2="879" stroke="#9c9c9c" stroke-width="1" stroke-dasharray="5,2"/>
<line x1="770.5" y1="452" x2="770.5" y2="879" stroke="#9c9c9c" stroke-width="1" stroke-dasharray="5,2"/>
<line x1="853.5" y1="452" x2="853.5" y2="879" stroke="#9c9c9c" stroke-width="1" stroke-dasharray="5,2"/>
<line x1="937.5" y1="452" x2="937.5" y2="879" stroke="#9c9c9c" stroke-width="1" stroke-dasharray="5,2"/>
<line x1="1020.5" y1="452" x2="1020.5" y2="879" stroke="#9c9c9c" stroke-width="1" stroke-dasharray="5,2"/>
<rect x="103.60" y="840.60" width="38.90" height="14.50" fill="none" stroke="rgba(0,0,0,0.8)" stroke-width="1" shape-rendering="auto"/>
<rect x="105.10" y="842.10" width="35.90" height="11.50" fill="rgba(88,206,37,0.55)" stroke="#66cc3f" stroke-width="2" shape-rendering="auto"/>
<rect x="145.34" y="824.89" width="38.90" height="30.21" fill="none" stroke="rgba(0,0,0,0.8)" stroke-width="1" shape-rendering="auto"/>
<rect x="146.84" y="826.39" width="35.90" height="27.21" fill="rgba(88,206,37,0.55)" stroke="#66cc3f" stroke-width="2" shape-rendering="auto"/>
<rect x="187.07" y="776.44" width="38.90" height="78.66" fill="none" stroke="rgba(0,0,0,0.8)" stroke-width="1" shape-rendering="auto"/>
<rect x="188.57" y="777.94" width="35.90" height="75.66" fill="rgba(88,206,37,0.55)" stroke="#66cc3f" stroke-width="2" shape-rendering="auto"/>
<rect x="228.81" y="765.96" width="38.90" height="89.14" fill="none" stroke="rgba(0,0,0,0.8)" stroke-width="1" shape-rendering="auto"/>
<rect x="230.31" y="767.46" width="35.90" height="86.14" fill="rgba(88,206,37,0.55)" stroke="#66cc3f" stroke-width="2" shape-rendering="auto"/>
<rect x="270.55" y="855.70" width="38.90" height="19.84" fill="none" stroke="rgba(0,0,0,0.8)" stroke-width="1" shape-rendering="auto"/>
<rect x="272.05" y="857.20" width="35.90" height="16.84" fill="rgba(160,16,18,0.93)" stroke="#d42222" stroke-width="2" shape-rendering="auto"/>
<rect x="312.29" y="810.49" width="38.90" height="44.61" fill="none" stroke="rgba(0,0,0,0.8)" stroke-width="1" shape-rendering="auto"/>
<rect x="313.79" y="811.99" width="35.90" height="41.61" fill="rgba(88,206,37,0.55)" stroke="#66cc3f" stroke-width="2" shape-rendering="auto"/>
<rect x="354.02" y="809.18" width="38.90" height="45.92" fill="none" stroke="rgba(0,0,0,0.8)" stroke-width="1" shape-rendering="auto"/>
<rect x="355.52" y="810.68" width="35.90" height="42.92" fill="rgba(88,206,37,0.55)" stroke="#66cc3f" stroke-width="2" shape-rendering="auto"/>
<rect x="395.76" y="852.39" width="38.90" height="2.71" fill="none" stroke="rgba(0,0,0,0.8)" stroke-width="1" shape-rendering="auto"/>
<rect x="397.26" y="853.89" width="35.90" height="0.50" fill="rgba(88,206,37,0.55)" stroke="#66cc3f" stroke-width="2" shape-rendering="auto"/>
<rect x="437.50" y="820.96" width="38.90" height="34.14" fill="none" stroke="rgba(0,0,0,0.8)" stroke-width="1" shape-rendering="auto"/>
<rect x="439.00" y="822.46" width="35.90" height="31.14" fill="rgba(88,206,37,0.55)" stroke="#66cc3f" stroke-width="2" shape-rendering="auto"/>
<rect x="479.23" y="828.82" width="38.90" height="26.28" fill="none" stroke="rgba(0,0,0,0.8)" stroke-width="1" shape-rendering="auto"/>
<rect x="480.73" y="830.32" width="35.90" height="23.28" fill="rgba(88,206,37,0.55)" stroke="#66cc3f" stroke-width="2" shape-rendering="auto"/>
<rect x="520.97" y="855.70" width="38.90" height="11.99" fill="none" stroke="rgba(0,0,0,0.8)" stroke-width="1" shape-rendering="auto"/>
<rect x="522.47" y="857.20" width="35.90" height="8.99" fill="rgba(160,16,18,0.93)" stroke="#d42222" stroke-width="2" shape-rendering="auto"/>
<rect x="562.71" y="789.53" width="38.90" height="65.57" fill="none" stroke="rgba(0,0,0,0.8)" stroke-width="1" shape-rendering="auto"/>
<rect x="564.21" y="791.03" width="35.90" height="62.57" fill="rgba(88,206,37,0.55)" stroke="#66cc3f" stroke-width="2" shape-rendering="auto"/>
<rect x="604.44" y="806.56" width="38.90" height="48.54" fill="none" stroke="rgba(0,0,0,0.8)" stroke-width="1" shape-rendering="auto"/>
<rect x="605.94" y="808.06" width="35.90" height="45.54" fill="rgba(88,206,37,0.55)" stroke="#66cc3f" stroke-width="2" shape-rendering="auto"/>
<rect x="646.18" y="769.89" width="38.90" height="85.21" fill="none" stroke="rgba(0,0,0,0.8)" stroke-width="1" shape-rendering="auto"/>
<rect x="647.68" y="771.39" width="35.90" height="82.21" fill="rgba(88,206,37,0.55)" stroke="#66cc3f" stroke-width="2" shape-rendering="auto"/>
<rect x="687.92" y="792.15" width="38.90" height="62.95" fill="none" stroke="rgba(0,0,0,0.8)" stroke-width="1" shape-rendering="auto"/>
<rect x="689.42" y="793.65" width="35.90" height="59.95" fill="rgba(88,206,37,0.55)" stroke="#66cc3f" stroke-width="2" shape-rendering="auto"/>
<rect x="729.65" y="772.51" width="38.90" height="82.59" fill="none" stroke="rgba(0,0,0,0.8)" stroke-width="1" shape-rendering="auto"/>
<rect x="731.15" y="774.01" width="35.90" height="79.59" fill="rgba(88,206,37,0.55)" stroke="#66cc3f" stroke-width="2" shape-rendering="auto"/>
<rect x="771.39" y="836.68" width="38.90" height="18.42" fill="none" stroke="rgba(0,0,0,0.8)" stroke-width="1" shape-rendering="auto"/>
<rect x="772.89" y="838.18" width="35.90" height="15.42" fill="rgba(88,206,37,0.55)" stroke="#66cc3f" stroke-width="2" shape-rendering="auto"/>
<rect x="854.87" y="635.01" width="38.90" height="220.09" fill="none" stroke="rgba(0,0,0,0.8)" stroke-width="1" shape-rendering="auto"/>
<rect x="856.37" y="636.51" width="35.90" height="217.09" fill="rgba(88,206,37,0.55)" stroke="#66cc3f" stroke-width="2" shape-rendering="auto"/>
<rect x="896.60" y="820.96" width="38.90" height="34.14" fill="none" stroke="rgba(0,0,0,0.8)" stroke-width="1" shape-rendering="auto"/>
<rect x="898.10" y="822.46" width="35.90" height="31.14" fill="rgba(88,206,37,0.55)" stroke="#66cc3f" stroke-width="2" shape-rendering="auto"/>
<rect x="938.34" y="451.68" width="38.90" height="403.42" fill="none" stroke="rgba(0,0,0,0.8)" stroke-width="1" shape-rendering="auto"/>
<rect x="939.84" y="453.18" width="35.90" height="400.42" fill="rgba(88,206,37,0.55)" stroke="#66cc3f" stroke-width="2" shape-rendering="auto"/>
<rect x="980.08" y="526.32" width="38.90" height="328.78" fill="none" stroke="rgba(0,0,0,0.8)" stroke-width="1" shape-rendering="auto"/>
<rect x="981.58" y="527.82" width="35.90" height="325.78" fill="rgba(88,206,37,0.55)" stroke="#66cc3f" stroke-width="2" shape-rendering="auto"/>
<rect x="1021.81" y="483.11" width="38.90" height="371.99" fill="none" stroke="rgba(0,0,0,0.8)" stroke-width="1" shape-rendering="auto"/>
<rect x="1023.31" y="484.61" width="35.90" height="368.99" fill="rgba(88,206,37,0.55)" stroke="#66cc3f" stroke-width="2" shape-rendering="auto"/>
<rect x="1063.55" y="548.59" width="38.90" height="306.51" fill="none" stroke="rgba(0,0,0,0.8)" stroke-width="1" shape-rendering="auto"/>
<rect x="1065.05" y="550.09" width="35.90" height="303.51" fill="rgba(88,206,37,0.55)" stroke="#66cc3f" stroke-width="2" shape-rendering="auto"/>
<line x1="102" y1="855.5" x2="1104" y2="855.5" stroke="#000" stroke-width="1.5"/>
<line x1="97.5" y1="452" x2="97.5" y2="879.5" stroke="#f2f2f2" stroke-width="1.6"/>
<line x1="97" y1="879.5" x2="1104" y2="879.5" stroke="#f2f2f2" stroke-width="1.6"/>
<line x1="93.5" y1="855.5" x2="97" y2="855.5" stroke="#f2f2f2" stroke-width="1.3"/>
<line x1="93.5" y1="829.5" x2="97" y2="829.5" stroke="#f2f2f2" stroke-width="1.3"/>
<line x1="93.5" y1="803.5" x2="97" y2="803.5" stroke="#f2f2f2" stroke-width="1.3"/>
<line x1="93.5" y1="776.5" x2="97" y2="776.5" stroke="#f2f2f2" stroke-width="1.3"/>
<line x1="93.5" y1="750.5" x2="97" y2="750.5" stroke="#f2f2f2" stroke-width="1.3"/>
<line x1="93.5" y1="724.5" x2="97" y2="724.5" stroke="#f2f2f2" stroke-width="1.3"/>
<line x1="93.5" y1="698.5" x2="97" y2="698.5" stroke="#f2f2f2" stroke-width="1.3"/>
<line x1="93.5" y1="672.5" x2="97" y2="672.5" stroke="#f2f2f2" stroke-width="1.3"/>
<line x1="93.5" y1="645.5" x2="97" y2="645.5" stroke="#f2f2f2" stroke-width="1.3"/>
<line x1="93.5" y1="619.5" x2="97" y2="619.5" stroke="#f2f2f2" stroke-width="1.3"/>
<line x1="93.5" y1="593.5" x2="97" y2="593.5" stroke="#f2f2f2" stroke-width="1.3"/>
<line x1="93.5" y1="567.5" x2="97" y2="567.5" stroke="#f2f2f2" stroke-width="1.3"/>
<line x1="93.5" y1="541.5" x2="97" y2="541.5" stroke="#f2f2f2" stroke-width="1.3"/>
<line x1="93.5" y1="514.5" x2="97" y2="514.5" stroke="#f2f2f2" stroke-width="1.3"/>
<line x1="93.5" y1="488.5" x2="97" y2="488.5" stroke="#f2f2f2" stroke-width="1.3"/>
<line x1="93.5" y1="462.5" x2="97" y2="462.5" stroke="#f2f2f2" stroke-width="1.3"/>
<line x1="102.5" y1="879" x2="102.5" y2="883" stroke="#f2f2f2" stroke-width="1.3"/>
<line x1="185.5" y1="879" x2="185.5" y2="883" stroke="#f2f2f2" stroke-width="1.3"/>
<line x1="269.5" y1="879" x2="269.5" y2="883" stroke="#f2f2f2" stroke-width="1.3"/>
<line x1="352.5" y1="879" x2="352.5" y2="883" stroke="#f2f2f2" stroke-width="1.3"/>
<line x1="436.5" y1="879" x2="436.5" y2="883" stroke="#f2f2f2" stroke-width="1.3"/>
<line x1="519.5" y1="879" x2="519.5" y2="883" stroke="#f2f2f2" stroke-width="1.3"/>
<line x1="603.5" y1="879" x2="603.5" y2="883" stroke="#f2f2f2" stroke-width="1.3"/>
<line x1="686.5" y1="879" x2="686.5" y2="883" stroke="#f2f2f2" stroke-width="1.3"/>
<line x1="770.5" y1="879" x2="770.5" y2="883" stroke="#f2f2f2" stroke-width="1.3"/>
<line x1="853.5" y1="879" x2="853.5" y2="883" stroke="#f2f2f2" stroke-width="1.3"/>
<line x1="937.5" y1="879" x2="937.5" y2="883" stroke="#f2f2f2" stroke-width="1.3"/>
<line x1="1020.5" y1="879" x2="1020.5" y2="883" stroke="#f2f2f2" stroke-width="1.3"/>
<text x="91" y="859.30" text-anchor="end" font-family="Liberation Sans" font-weight="bold" font-size="12" fill="#ececec">$0.00</text>
<text x="91" y="833.11" text-anchor="end" font-family="Liberation Sans" font-weight="bold" font-size="12" fill="#ececec">$100.00</text>
<text x="91" y="806.92" text-anchor="end" font-family="Liberation Sans" font-weight="bold" font-size="12" fill="#ececec">$200.00</text>
<text x="91" y="780.73" text-anchor="end" font-family="Liberation Sans" font-weight="bold" font-size="12" fill="#ececec">$300.00</text>
<text x="91" y="754.54" text-anchor="end" font-family="Liberation Sans" font-weight="bold" font-size="12" fill="#ececec">$400.00</text>
<text x="91" y="728.35" text-anchor="end" font-family="Liberation Sans" font-weight="bold" font-size="12" fill="#ececec">$500.00</text>
<text x="91" y="702.16" text-anchor="end" font-family="Liberation Sans" font-weight="bold" font-size="12" fill="#ececec">$600.00</text>
<text x="91" y="675.97" text-anchor="end" font-family="Liberation Sans" font-weight="bold" font-size="12" fill="#ececec">$700.00</text>
<text x="91" y="649.78" text-anchor="end" font-family="Liberation Sans" font-weight="bold" font-size="12" fill="#ececec">$800.00</text>
<text x="91" y="623.59" text-anchor="end" font-family="Liberation Sans" font-weight="bold" font-size="12" fill="#ececec">$900.00</text>
<text x="91" y="597.40" text-anchor="end" font-family="Liberation Sans" font-weight="bold" font-size="12" fill="#ececec">$1,000.00</text>
<text x="91" y="571.21" text-anchor="end" font-family="Liberation Sans" font-weight="bold" font-size="12" fill="#ececec">$1,100.00</text>
<text x="91" y="545.02" text-anchor="end" font-family="Liberation Sans" font-weight="bold" font-size="12" fill="#ececec">$1,200.00</text>
<text x="91" y="518.83" text-anchor="end" font-family="Liberation Sans" font-weight="bold" font-size="12" fill="#ececec">$1,300.00</text>
<text x="91" y="492.64" text-anchor="end" font-family="Liberation Sans" font-weight="bold" font-size="12" fill="#ececec">$1,400.00</text>
<text x="91" y="466.45" text-anchor="end" font-family="Liberation Sans" font-weight="bold" font-size="12" fill="#ececec">$1,500.00</text>
<text x="102.80" y="896" font-family="Liberation Sans" font-weight="bold" font-size="12" letter-spacing="-0.3" fill="#ececec">1:00 AM</text>
<text x="186.27" y="896" font-family="Liberation Sans" font-weight="bold" font-size="12" letter-spacing="-0.3" fill="#ececec">2:00 AM</text>
<text x="269.75" y="896" font-family="Liberation Sans" font-weight="bold" font-size="12" letter-spacing="-0.3" fill="#ececec">3:00 AM</text>
<text x="353.22" y="896" font-family="Liberation Sans" font-weight="bold" font-size="12" letter-spacing="-0.3" fill="#ececec">4:00 AM</text>
<text x="436.70" y="896" font-family="Liberation Sans" font-weight="bold" font-size="12" letter-spacing="-0.3" fill="#ececec">5:00 AM</text>
<text x="520.17" y="896" font-family="Liberation Sans" font-weight="bold" font-size="12" letter-spacing="-0.3" fill="#ececec">6:00 AM</text>
<text x="603.64" y="896" font-family="Liberation Sans" font-weight="bold" font-size="12" letter-spacing="-0.3" fill="#ececec">7:00 AM</text>
<text x="687.12" y="896" font-family="Liberation Sans" font-weight="bold" font-size="12" letter-spacing="-0.3" fill="#ececec">8:00 AM</text>
<text x="770.59" y="896" font-family="Liberation Sans" font-weight="bold" font-size="12" letter-spacing="-0.3" fill="#ececec">9:00 AM</text>
<text x="854.07" y="896" font-family="Liberation Sans" font-weight="bold" font-size="12" letter-spacing="-0.3" fill="#ececec">10:00 AM</text>
<text x="937.54" y="896" font-family="Liberation Sans" font-weight="bold" font-size="12" letter-spacing="-0.3" fill="#ececec">11:00 AM</text>
<text x="1021.01" y="896" font-family="Liberation Sans" font-weight="bold" font-size="12" letter-spacing="-0.3" fill="#ececec">12:00 PM</text>
<text x="600" y="910.2" text-anchor="middle" font-family="Liberation Sans" font-weight="bold" font-size="11" fill="#ececec">Half hourly</text>
<text transform="translate(30.3,666.2) rotate(-90)" text-anchor="middle" font-family="Liberation Sans" font-weight="bold" font-size="12.8" letter-spacing="-0.65" fill="#ececec">Net profit ($)</text>
</svg>
</body></html>
